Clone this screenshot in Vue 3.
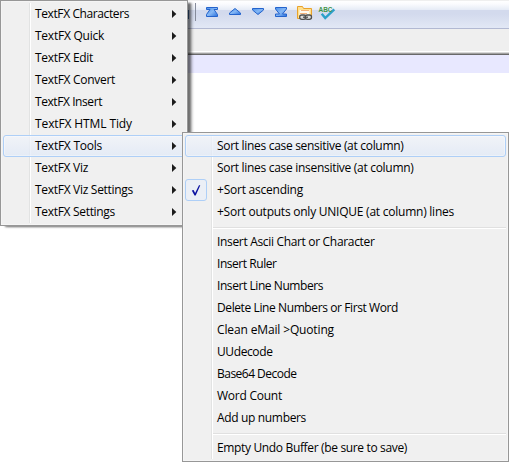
<script setup>
import { ref, onMounted } from 'vue'

const mainItems = [
  { label: 'TextFX Characters', w: 94 },
  { label: 'TextFX Quick', w: 69 },
  { label: 'TextFX Edit', w: 58 },
  { label: 'TextFX Convert', w: 80 },
  { label: 'TextFX Insert', w: 67 },
  { label: 'TextFX HTML Tidy', w: 97 },
  { label: 'TextFX Tools', w: 67, active: true },
  { label: 'TextFX Viz', w: 53 },
  { label: 'TextFX Viz Settings', w: 98 },
  { label: 'TextFX Settings', w: 80 },
]
const subItems = [
  { label: 'Sort lines case sensitive (at column)', w: 186.5, active: true },
  { label: 'Sort lines case insensitive (at column)', w: 196.5 },
  { label: '+Sort ascending', w: 86, checked: true },
  { label: '+Sort outputs only UNIQUE (at column) lines', w: 237 },
  { separator: true },
  { label: 'Insert Ascii Chart or Character', w: 157.5 },
  { label: 'Insert Ruler', w: 59.5 },
  { label: 'Insert Line Numbers', w: 106 },
  { label: 'Delete Line Numbers or First Word', w: 181 },
  { label: 'Clean eMail >Quoting', w: 117 },
  { label: 'UUdecode', w: 55.5 },
  { label: 'Base64 Decode', w: 79.5 },
  { label: 'Word Count', w: 65 },
  { label: 'Add up numbers', w: 89 },
  { separator: true },
  { label: 'Empty Undo Buffer (be sure to save)', w: 190 },
]

const root = ref(null)
const spacing = ref({})
onMounted(() => {
  const all = [...mainItems, ...subItems]
  const next = {}
  root.value.querySelectorAll('.label').forEach((el) => {
    const item = all.find((i) => i.label === el.textContent)
    next[item.label] = (item.w - el.getBoundingClientRect().width) / item.label.length
  })
  spacing.value = next
})
const track = (item) => ({ letterSpacing: (spacing.value[item.label] || 0) + 'px' })
</script>

<template>
  <div ref="root" class="window">
    <div class="toolbar">
      <span class="blue-edge"></span>
      <span class="divider"></span>
      <svg class="icons" width="132" height="18" viewBox="205 4 132 18">
        <defs>
          <linearGradient id="blue" x1="0" y1="0" x2="1" y2="1">
            <stop offset="0" stop-color="#4a90ea" />
            <stop offset=".5" stop-color="#86b8f5" />
            <stop offset="1" stop-color="#2a70dc" />
          </linearGradient>
        </defs>
        <g fill="url(#blue)" stroke="#2463cc" stroke-width="1">
          <path d="M206.500 7.500h11v2h-3.500l3.500 5v2h-11v-2l3.500-5h-3.500z" />
          <path d="M235 8.500L240.500 13v1.500h-11V13z" />
          <path d="M252.500 8.500h11V10L258 14.500L252.500 10z" />
          <path d="M275.500 7.500h11v1.500l-4 5h4v2.500h-11v-2.500h4l-4-5z" />
        </g>
        <path d="M297.500 18.500v-12h5l1 2h8v10z" fill="#ffe08e" stroke="#e9a22b" />
        <path d="M299.500 10h10v5h-10z" fill="#fffaf0" />
        <path d="M301 10.500h8M300 13.500h7" stroke="#f3b27c" />
        <g fill="#dcdcdc" stroke="#4f4f4f" stroke-width="1.300">
          <rect x="299.700" y="15" width="6.300" height="4.300" rx="2.100" />
          <rect x="305.200" y="15" width="6.300" height="4.300" rx="2.100" />
          <path d="M303 17.200h5" />
        </g>
        <path d="M321.700 13.800l3.500 4.200L334.300 9.300" fill="none" stroke="#2ba0c9" stroke-width="2.400" />
        <text x="318.500" y="11.500" textLength="14" lengthAdjust="spacingAndGlyphs" class="abc">ABC</text>
      </svg>
    </div>
    <div class="tabs"></div>
    <div class="edge"></div>
    <div class="current-line"></div>

    <div class="menu main">
      <div v-for="item in mainItems" :key="item.label" class="row" :class="{ active: item.active }">
        <span class="label" :style="track(item)">{{ item.label }}</span>
        <svg class="arrow" width="5" height="8" viewBox="0 0 5 8"><path d="M0 0L4.300 4L0 8z" /></svg>
      </div>
    </div>

    <div class="menu sub">
      <template v-for="(item, i) in subItems" :key="i">
        <div v-if="item.separator" class="separator"></div>
        <div v-else class="row" :class="{ active: item.active }">
          <span v-if="item.checked" class="check">
            <svg width="10" height="11" viewBox="0 0 10 11"><path d="M.8 5.500L2.600 5L4.100 8L8 .3L9.300 .3L4.700 10.500L3.500 10.500z" /></svg>
          </span>
          <span class="label" :style="track(item)">{{ item.label }}</span>
        </div>
      </template>
    </div>
  </div>
</template>

<style>
body { margin: 0; background: #fff; overflow: hidden; }
</style>
<style scoped>
.window {
  position: relative;
  width: 509px;
  height: 462px;
  overflow: hidden;
  background: #fff;
  font: 12px "Open Sans", "Noto Sans", sans-serif;
  color: #000;
}
.toolbar {
  box-sizing: border-box;
  display: flex;
  height: 29px;
  padding: 3px 0 0 187px;
  border-top: 1px solid #efefef;
  border-bottom: 1px solid #b2b9d2;
  background: linear-gradient(#fff 0, #fafbfe 3px, #e5ebf6 9px, #d3daed 9px, #d3daed 13px, #e2e8f5 27px);
}
.blue-edge { width: 2px; height: 9px; margin-top: 6px; background: #3d6496; }
.divider { width: 1px; height: 18px; margin: -1px 9px 0 6px; background: #858b9b; }
.icons { display: block; }
.abc { font: bold 7.5px "Liberation Sans", sans-serif; fill: #3f9448; }
.tabs { height: 22px; background: #efefef; border-bottom: 1px solid #fff; }
.edge { height: 1px; background: #d8d8d8; border-bottom: 1px solid #a0a0a0; box-shadow: 0 1px #696969; margin-bottom: 1px; }
.current-line { height: 18px; background: #e8e8ff; }
.menu {
  position: absolute;
  box-sizing: border-box;
  padding: 2px;
  border: 1px solid #979797;
  background: linear-gradient(90deg, #e2e3e3 1px, #fff 1px) 28px 2px / 2px calc(100% - 4px) no-repeat, #f0f0f0;
  box-shadow: inset 0 0 0 1px #f5f5f5;
}
.main { left: 0; top: 0; width: 188px; height: 226px; box-shadow: inset 0 0 0 1px #f5f5f5, 4px 2px 2px -1px rgba(0, 0, 0, .5), 6px 2px 2px -1px rgba(0, 0, 0, .12); }
.sub { left: 182px; top: 132px; width: 327px; height: 330px; }
.row {
  box-sizing: border-box;
  display: flex;
  align-items: center;
  height: 22px;
  padding-left: 32px;
  position: relative;
}
.row.active {
  border: 1px solid #aecff7;
  border-radius: 3px;
  padding-left: 31px;
  background: linear-gradient(rgba(241, 244, 250, .75), rgba(224, 233, 247, .75));
  box-shadow: inset 0 0 0 1px rgba(255, 255, 255, .35);
}
.label { white-space: pre; line-height: 20px; }
.arrow { margin-left: auto; margin-right: 8px; fill: #1c1c1c; }
.main .row.active .arrow { margin-right: 7px; }
.check {
  position: absolute;
  left: 0;
  top: 0;
  box-sizing: border-box;
  display: flex;
  align-items: center;
  justify-content: center;
  width: 22px;
  height: 22px;
  border: 1px solid #aecff7;
  border-radius: 3px;
  background: #ebeff6;
}
.check svg { fill: #0c12a1; }
.separator { height: 1px; margin: 4px 0 2px 28px; background: #e0e0e0; border-bottom: 1px solid #fff; }
</style>
